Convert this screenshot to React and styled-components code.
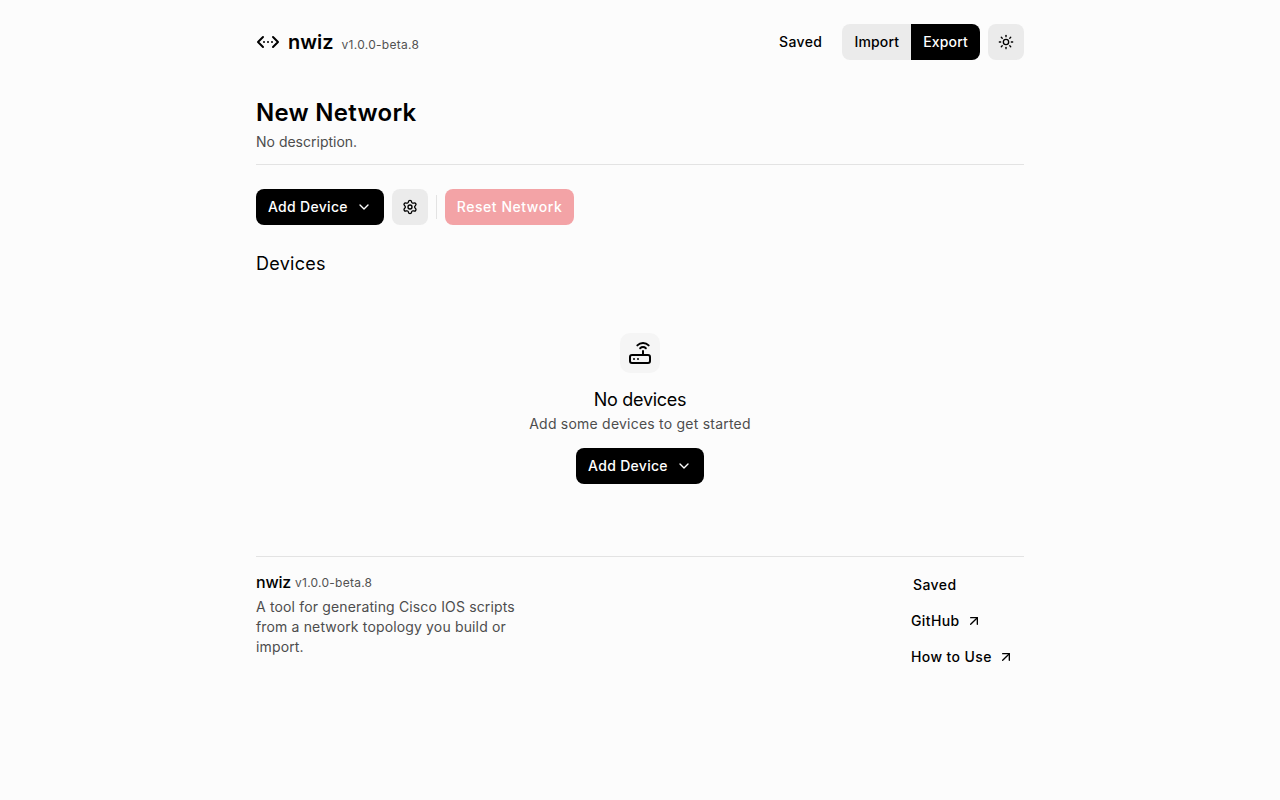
import React from "react";
import styled, { createGlobalStyle } from "styled-components";
import { ChevronsLeftRightEllipsis, Sun, Settings, ChevronDown, Router, ArrowUpRight } from "lucide-react";

const Global = createGlobalStyle`
  html, body { margin: 0; padding: 0; background: #fcfcfc; }
  body { font-family: Inter, "Liberation Sans", sans-serif; color: #000; }
  * { box-sizing: border-box; }
`;

const Page = styled.div`
  width: 768px;
  margin: 0 auto;
  padding-top: 24px;
  min-height: 800px;
`;

const Header = styled.header`
  display: flex;
  align-items: center;
  justify-content: space-between;
  height: 36px;
`;

const Brand = styled.div`
  display: flex;
  align-items: center;
  gap: 8px;
`;

const BrandName = styled.span`
  font-size: 20px;
  line-height: 28px;
  font-weight: 600;
`;

const Version = styled.span`
  font-size: 12px;
  line-height: 16px;
  letter-spacing: 0.28px;
  color: #525252;
  position: relative;
  top: 3px;
`;

const Actions = styled.div`
  display: flex;
  align-items: center;
  gap: 8px;
`;

const Button = styled.button`
  display: inline-flex;
  align-items: center;
  justify-content: center;
  gap: 8px;
  height: 36px;
  padding: 0 12px;
  border: 0;
  border-radius: ${(p) => p.$radius || "8px"};
  font-family: inherit;
  font-size: 14px;
  font-weight: 500;
  line-height: 20px;
  letter-spacing: ${(p) => p.$tracking || "0.3px"};
  white-space: nowrap;
  background: ${(p) => (p.$variant === "primary" ? "#000" : p.$variant === "ghost" ? "transparent" : p.$variant === "danger" ? "#f3a3a6" : "#ebebeb")};
  color: ${(p) => (p.$variant === "primary" || p.$variant === "danger" ? "#fff" : "#000")};
`;

const IconButton = styled(Button)`
  width: 36px;
  padding: 0;
`;

const Group = styled.div`
  display: flex;
`;

const TitleBlock = styled.section`
  margin-top: 37px;
  padding-bottom: 12px;
  border-bottom: 1px solid #e3e3e3;
`;

const Title = styled.h1`
  margin: 0 0 3px;
  font-size: 24px;
  line-height: 32px;
  font-weight: 600;
  letter-spacing: 0.27px;
`;

const Description = styled.p`
  margin: 0;
  font-size: 14px;
  line-height: 20px;
  color: #4d4d4d;
`;

const Toolbar = styled.div`
  display: flex;
  align-items: center;
  gap: 8px;
  margin-top: 24px;
`;

const Divider = styled.div`
  width: 1px;
  height: 24px;
  background: #e3e3e3;
`;

const SectionTitle = styled.h2`
  margin: 25px 0 0;
  font-size: 18px;
  line-height: 28px;
  font-weight: 400;
  letter-spacing: 0.28px;
`;

const Empty = styled.section`
  display: flex;
  flex-direction: column;
  align-items: center;
  padding: 55px 0 72px;
  border-bottom: 1px solid #e3e3e3;
`;

const EmptyIcon = styled.div`
  display: flex;
  align-items: center;
  justify-content: center;
  width: 40px;
  height: 40px;
  border-radius: 10px;
  background: #f5f5f5;
  margin-bottom: 13px;
`;

const EmptyTitle = styled.h3`
  margin: 0;
  font-size: 18px;
  line-height: 28px;
  font-weight: 400;
  letter-spacing: -0.3px;
`;

const EmptyText = styled.p`
  margin: 0 0 14px;
  font-size: 14px;
  line-height: 20px;
  letter-spacing: 0.22px;
  color: #4d4d4d;
`;

const Footer = styled.footer`
  display: flex;
  justify-content: space-between;
  align-items: flex-start;
  padding-top: 10px;
`;

const FooterInfo = styled.div`
  width: 288px;
  padding-top: 3px;
`;

const FooterBrand = styled.div`
  display: flex;
  align-items: center;
  gap: 4px;
  height: 24px;
`;

const FooterName = styled.span`
  font-size: 16px;
  line-height: 24px;
  font-weight: 500;
  letter-spacing: -0.2px;
`;

const FooterVersion = styled.span`
  font-size: 12px;
  line-height: 16px;
  letter-spacing: 0.25px;
  color: #525252;
  position: relative;
  top: 1px;
`;

const FooterText = styled.p`
  margin: 3px 0 0;
  width: 270px;
  font-size: 14px;
  line-height: 20px;
  letter-spacing: 0.15px;
  color: #4d4d4d;
`;

const FooterLinks = styled.div`
  display: flex;
  flex-direction: column;
  align-items: flex-start;
  width: 113px;
`;

const SavedLink = styled(Button)`
  padding: 0 2px;
`;

const LinkButton = styled.a`
  display: inline-flex;
  align-items: center;
  gap: 6px;
  height: 36px;
  font-size: 14px;
  line-height: 20px;
  font-weight: 500;
  letter-spacing: 0.4px;
  color: #000;
  text-decoration: none;
`;

const AddDevice = () => (
  <Button $variant="primary">
    Add Device
    <ChevronDown size={16} strokeWidth={2} />
  </Button>
);

export default function App() {
  return (
    <>
      <Global />
      <Page>
        <Header>
          <Brand>
            <ChevronsLeftRightEllipsis size={24} strokeWidth={2} />
            <BrandName>nwiz</BrandName>
            <Version>v1.0.0-beta.8</Version>
          </Brand>
          <Actions>
            <Button $variant="ghost" $tracking="0.4px">Saved</Button>
            <Group>
              <Button $radius="8px 0 0 8px" $tracking="0.17px">Import</Button>
              <Button $variant="primary" $radius="0 8px 8px 0" $tracking="0.17px">Export</Button>
            </Group>
            <IconButton aria-label="Theme"><Sun size={16} /></IconButton>
          </Actions>
        </Header>
        <TitleBlock>
          <Title>New Network</Title>
          <Description>No description.</Description>
        </TitleBlock>
        <Toolbar>
          <AddDevice />
          <IconButton aria-label="Settings"><Settings size={16} /></IconButton>
          <Divider />
          <Button $variant="danger" $tracking="0.54px">Reset Network</Button>
        </Toolbar>
        <SectionTitle>Devices</SectionTitle>
        <Empty>
          <EmptyIcon><Router size={24} /></EmptyIcon>
          <EmptyTitle>No devices</EmptyTitle>
          <EmptyText>Add some devices to get started</EmptyText>
          <AddDevice />
        </Empty>
        <Footer>
          <FooterInfo>
            <FooterBrand>
              <FooterName>nwiz</FooterName>
              <FooterVersion>v1.0.0-beta.8</FooterVersion>
            </FooterBrand>
            <FooterText>A tool for generating Cisco IOS scripts from a network topology you build or import.</FooterText>
          </FooterInfo>
          <FooterLinks>
            <SavedLink $variant="ghost" $tracking="0.4px">Saved</SavedLink>
            <LinkButton href="#">GitHub <ArrowUpRight size={16} /></LinkButton>
            <LinkButton href="#">How to Use <ArrowUpRight size={16} /></LinkButton>
          </FooterLinks>
        </Footer>
      </Page>
    </>
  );
}
